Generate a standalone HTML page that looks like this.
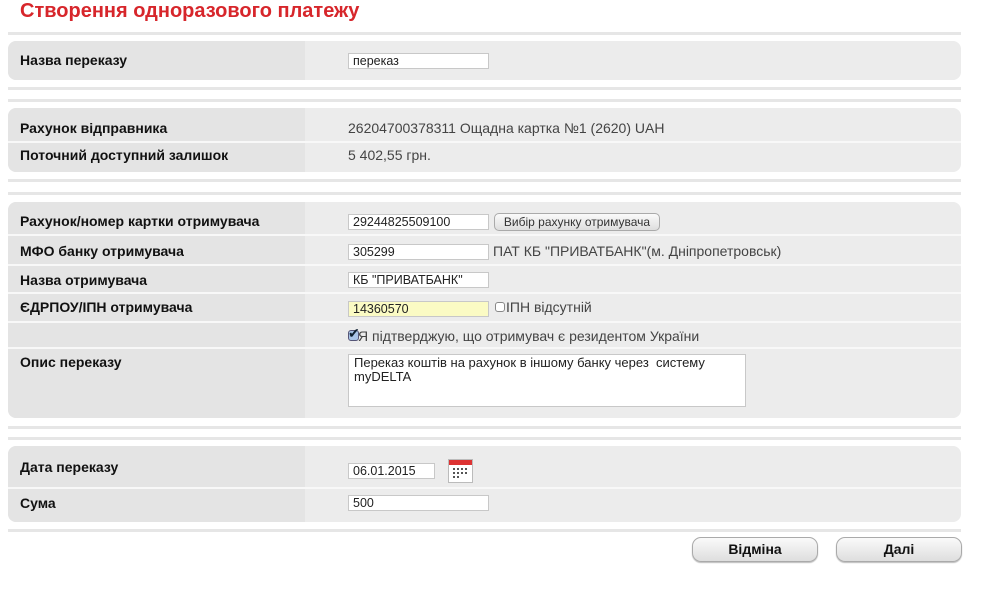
<!DOCTYPE html>
<html><head><meta charset="utf-8"><style>
*{box-sizing:border-box}
body{margin:0;width:1000px;height:610px;background:#fff;font-family:"Liberation Sans",Arial,sans-serif;position:relative;overflow:hidden}
.a{position:absolute}
.h{left:20px;top:-2px;color:#d7262b;font-weight:bold;font-size:20px;line-height:26px}
.ln{left:8px;width:953px;height:3px;background:#e6e6e6}
.p{left:8px;width:953px;background:#ececec;border-radius:8px;overflow:hidden}
.lc{left:0;width:297px;background:#e4e4e4;top:0;bottom:0}
.sep{left:0;right:0;height:2px;background:#f8f8f8}
.lb{left:12px;font-weight:bold;font-size:14px;color:#111}
.tx{font-size:14px;color:#444}
.in{height:16px;border:1px solid #c8c8c8;background:#fff;font-size:12.5px;color:#222;padding:1px 4px;line-height:13px}
.btn{height:25px;border:1px solid #aaa;border-radius:9px;background:linear-gradient(#fafafa,#dedede);font-weight:bold;font-size:14px;text-align:center;line-height:23px;color:#111;box-shadow:0 1px 1px #bbb}
</style></head><body>
<div class="a h">Створення одноразового платежу</div>
<div class="a ln" style="top:32px"></div>

<div class="a p" style="top:41px;height:39px"><div class="a lc"></div>
<div class="a lb" style="top:11px">Назва переказу</div></div>
<div class="a in" style="left:348px;top:53px;width:141px">переказ</div>

<div class="a ln" style="top:87px"></div>
<div class="a ln" style="top:99px"></div>

<div class="a p" style="top:108px;height:64px"><div class="a lc"></div>
<div class="a sep" style="top:33px"></div>
<div class="a lb" style="top:12px">Рахунок відправника</div>
<div class="a lb" style="top:39px">Поточний доступний залишок</div></div>
<div class="a tx" style="left:348px;top:120px">26204700378311 Ощадна картка №1 (2620) UAH</div>
<div class="a tx" style="left:348px;top:147px">5 402,55 грн.</div>

<div class="a ln" style="top:179px"></div>
<div class="a ln" style="top:192px"></div>

<div class="a p" style="top:202px;height:216px"><div class="a lc"></div>
<div class="a sep" style="top:32px"></div>
<div class="a sep" style="top:62px"></div>
<div class="a sep" style="top:90px"></div>
<div class="a sep" style="top:119px"></div>
<div class="a sep" style="top:145px"></div>
<div class="a lb" style="top:11px">Рахунок/номер картки отримувача</div>
<div class="a lb" style="top:41px">МФО банку отримувача</div>
<div class="a lb" style="top:70px">Назва отримувача</div>
<div class="a lb" style="top:97px">ЄДРПОУ/ІПН отримувача</div>
<div class="a lb" style="top:152px">Опис переказу</div></div>
<div class="a in" style="left:348px;top:214px;width:141px">29244825509100</div>
<div class="a btn" style="left:494px;top:213px;width:166px;height:18px;line-height:16px;font-size:12px;font-weight:normal;border-radius:5px;color:#333;box-shadow:none">Вибір рахунку отримувача</div>
<div class="a in" style="left:348px;top:244px;width:141px">305299</div>
<div class="a tx" style="left:493px;top:243px">ПАТ КБ "ПРИВАТБАНК"(м. Дніпропетровськ)</div>
<div class="a in" style="left:348px;top:272px;width:141px">КБ "ПРИВАТБАНК"</div>
<div class="a in" style="left:348px;top:301px;width:141px;background:#fbfbc4">14360570</div>
<div class="a" style="left:495px;top:302px;width:10px;height:10px;border:1px solid #888;border-radius:3px;background:#fff"></div>
<div class="a tx" style="left:506px;top:299px">ІПН відсутній</div>
<div class="a" style="left:348px;top:330px;width:11px;height:11px;border:1px solid #557;border-radius:3px;background:#aac4e8"></div>
<div class="a" style="left:348px;top:325px;font-size:14px;color:#123">✔</div>
<div class="a tx" style="left:358px;top:328px">Я підтверджую, що отримувач є резидентом України</div>
<div class="a in" style="left:348px;top:354px;width:398px;height:53px;padding:1px 5px;font-size:13px;line-height:14px">Переказ коштів на рахунок в іншому банку через&nbsp; систему<br>myDELTA</div>

<div class="a ln" style="top:426px"></div>
<div class="a ln" style="top:437px"></div>

<div class="a p" style="top:446px;height:76px"><div class="a lc"></div>
<div class="a sep" style="top:41px"></div>
<div class="a lb" style="top:13px">Дата переказу</div>
<div class="a lb" style="top:49px">Сума</div></div>
<div class="a in" style="left:348px;top:463px;width:87px">06.01.2015</div>
<svg class="a" style="left:448px;top:459px" width="25" height="24" viewBox="0 0 25 24">
<rect x="0.5" y="0.5" width="24" height="23" fill="#fff" stroke="#bbb"/>
<rect x="1" y="1" width="23" height="5" fill="#d33"/>
<g fill="#555">
<rect x="5" y="9" width="2" height="2"/><rect x="9" y="9" width="2" height="2"/><rect x="13" y="9" width="2" height="2"/><rect x="17" y="9" width="2" height="2"/>
<rect x="5" y="13" width="2" height="2"/><rect x="9" y="13" width="2" height="2"/><rect x="13" y="13" width="2" height="2"/><rect x="17" y="13" width="2" height="2"/>
<rect x="5" y="17" width="2" height="2"/><rect x="9" y="17" width="2" height="2"/>
</g></svg>
<div class="a in" style="left:348px;top:495px;width:141px">500</div>

<div class="a ln" style="top:529px"></div>
<div class="a btn" style="left:692px;top:537px;width:126px">Відміна</div>
<div class="a btn" style="left:836px;top:537px;width:126px">Далі</div>
</body></html>
